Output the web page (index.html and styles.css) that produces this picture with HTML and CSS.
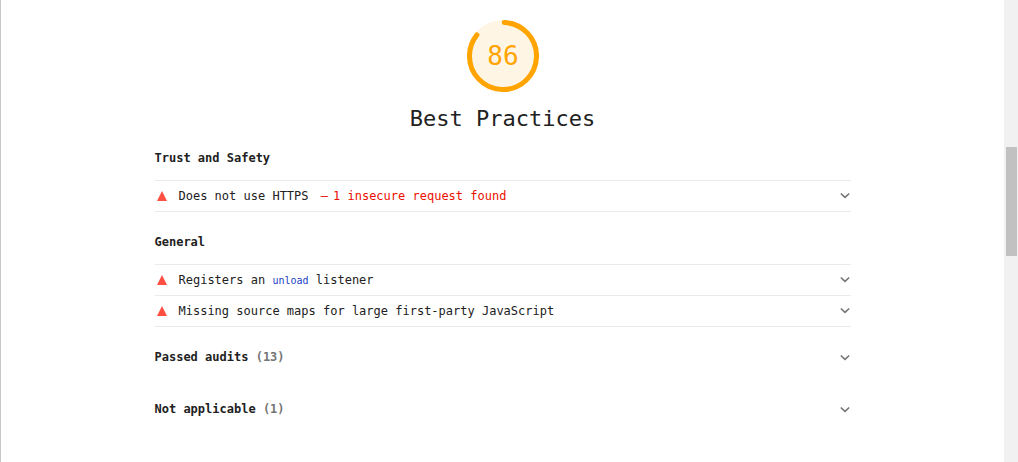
FILE: index.html
```html
<!DOCTYPE html>
<html lang="en">
<head>
<meta charset="utf-8">
<title>Best Practices</title>
<link rel="stylesheet" href="styles.css">
</head>
<body>
<svg class="defs" aria-hidden="true">
  <symbol id="chevron" viewBox="0 0 12 8"><path d="M1.8 1.5 L6 5.3 L10.2 1.5" fill="none" stroke="#757575" stroke-width="1.6"/></symbol>
  <symbol id="fail" viewBox="0 0 10 10"><path d="M5 0 L10 10 H0 Z" fill="#ff4e42"/></symbol>
</svg>
<div class="viewport">
  <main class="report">
    <header class="category">
      <svg class="gauge" viewBox="0 0 72 72" role="img" aria-label="Score 86">
        <circle cx="36" cy="36" r="36" fill="#fff5e5"/>
        <circle cx="36" cy="36" r="33.5" fill="none" stroke="#ffa400" stroke-width="5" stroke-linecap="round" stroke-dasharray="179.2 211" transform="rotate(-88 36 36)"/>
        <text class="score" x="36" y="45" text-anchor="middle">86</text>
      </svg>
      <h1 class="title">Best Practices</h1>
    </header>

    <section class="group">
      <h2 class="heading">Trust and Safety</h2>
      <div class="audits">
        <details class="audit">
          <summary class="row"><svg class="icon"><use href="#fail"/></svg><span class="text">Does not use HTTPS <span class="display">1 insecure request found</span></span><svg class="chevron"><use href="#chevron"/></svg></summary>
        </details>
      </div>
    </section>

    <section class="group">
      <h2 class="heading">General</h2>
      <div class="audits">
        <details class="audit">
          <summary class="row"><svg class="icon"><use href="#fail"/></svg><span class="text">Registers an <code class="code">unload</code> listener</span><svg class="chevron"><use href="#chevron"/></svg></summary>
        </details>
        <details class="audit">
          <summary class="row"><svg class="icon"><use href="#fail"/></svg><span class="text">Missing source maps for large first-party JavaScript</span><svg class="chevron"><use href="#chevron"/></svg></summary>
        </details>
      </div>
    </section>

    <details class="clump">
      <summary class="clump-row"><span class="heading">Passed audits <span class="count">(13)</span></span><svg class="chevron"><use href="#chevron"/></svg></summary>
    </details>
    <details class="clump">
      <summary class="clump-row"><span class="heading">Not applicable <span class="count">(1)</span></span><svg class="chevron"><use href="#chevron"/></svg></summary>
    </details>
  </main>
  <div class="scrollbar" aria-hidden="true"><div class="thumb"></div></div>
</div>
</body>
</html>
```
FILE: styles.css
```css
* { box-sizing: border-box; }

body {
  margin: 0;
  background: #fff;
  color: #212121;
  font: 12px/18px "DejaVu Sans Mono", monospace;
}

.defs { display: none; }

.viewport {
  display: flex;
  min-height: 100vh;
  border-left: 1px solid #c8c8c8;
}

.report {
  flex: 1;
  max-width: 760px;
  margin: 0 auto;
  padding: 20px 32px 32px;
}

.category {
  display: flex;
  flex-direction: column;
  align-items: center;
}

.gauge {
  width: 72px;
  height: 72px;
}

.score {
  font-size: 26px;
  fill: #ffa400;
}

.title {
  margin: 12px 0 0;
  font-size: 22px;
  font-weight: 400;
  line-height: 30px;
}

.group { padding-top: 14px; }
.group + .group { padding-top: 20px; }

.heading {
  margin: 0;
  font-size: 12px;
  font-weight: 700;
  line-height: 20px;
}

.audits {
  margin-top: 12px;
  border-top: 1px solid #ebebeb;
}

.audit { border-bottom: 1px solid #ebebeb; }

.row,
.clump-row {
  display: flex;
  align-items: center;
  cursor: pointer;
  list-style: none;
}

.row { height: 30px; }

.icon {
  width: 10px;
  height: 10px;
  margin: 0 12px 0 2px;
}

.text { flex: 1; }

.display {
  margin: 0 5px;
  color: #eb0f00;
}

.display::before {
  content: "—";
  margin-right: 5px;
}

.code {
  color: #1a41c4;
  font: 10px "DejaVu Sans Mono", monospace;
}

.chevron {
  width: 12px;
  height: 8px;
}

.clump { padding-top: 20px; }
.clump + .clump { padding-top: 32px; }

.clump-row { justify-content: space-between; }

.clump .chevron { margin-top: 2px; }

.count {
  color: #757575;
  font-weight: 700;
}

.scrollbar {
  flex: none;
  width: 14px;
  padding: 147px 1px 0 2px;
  background: #f1f1f1;
}

.thumb {
  height: 109px;
  background: #c1c1c1;
}
```
